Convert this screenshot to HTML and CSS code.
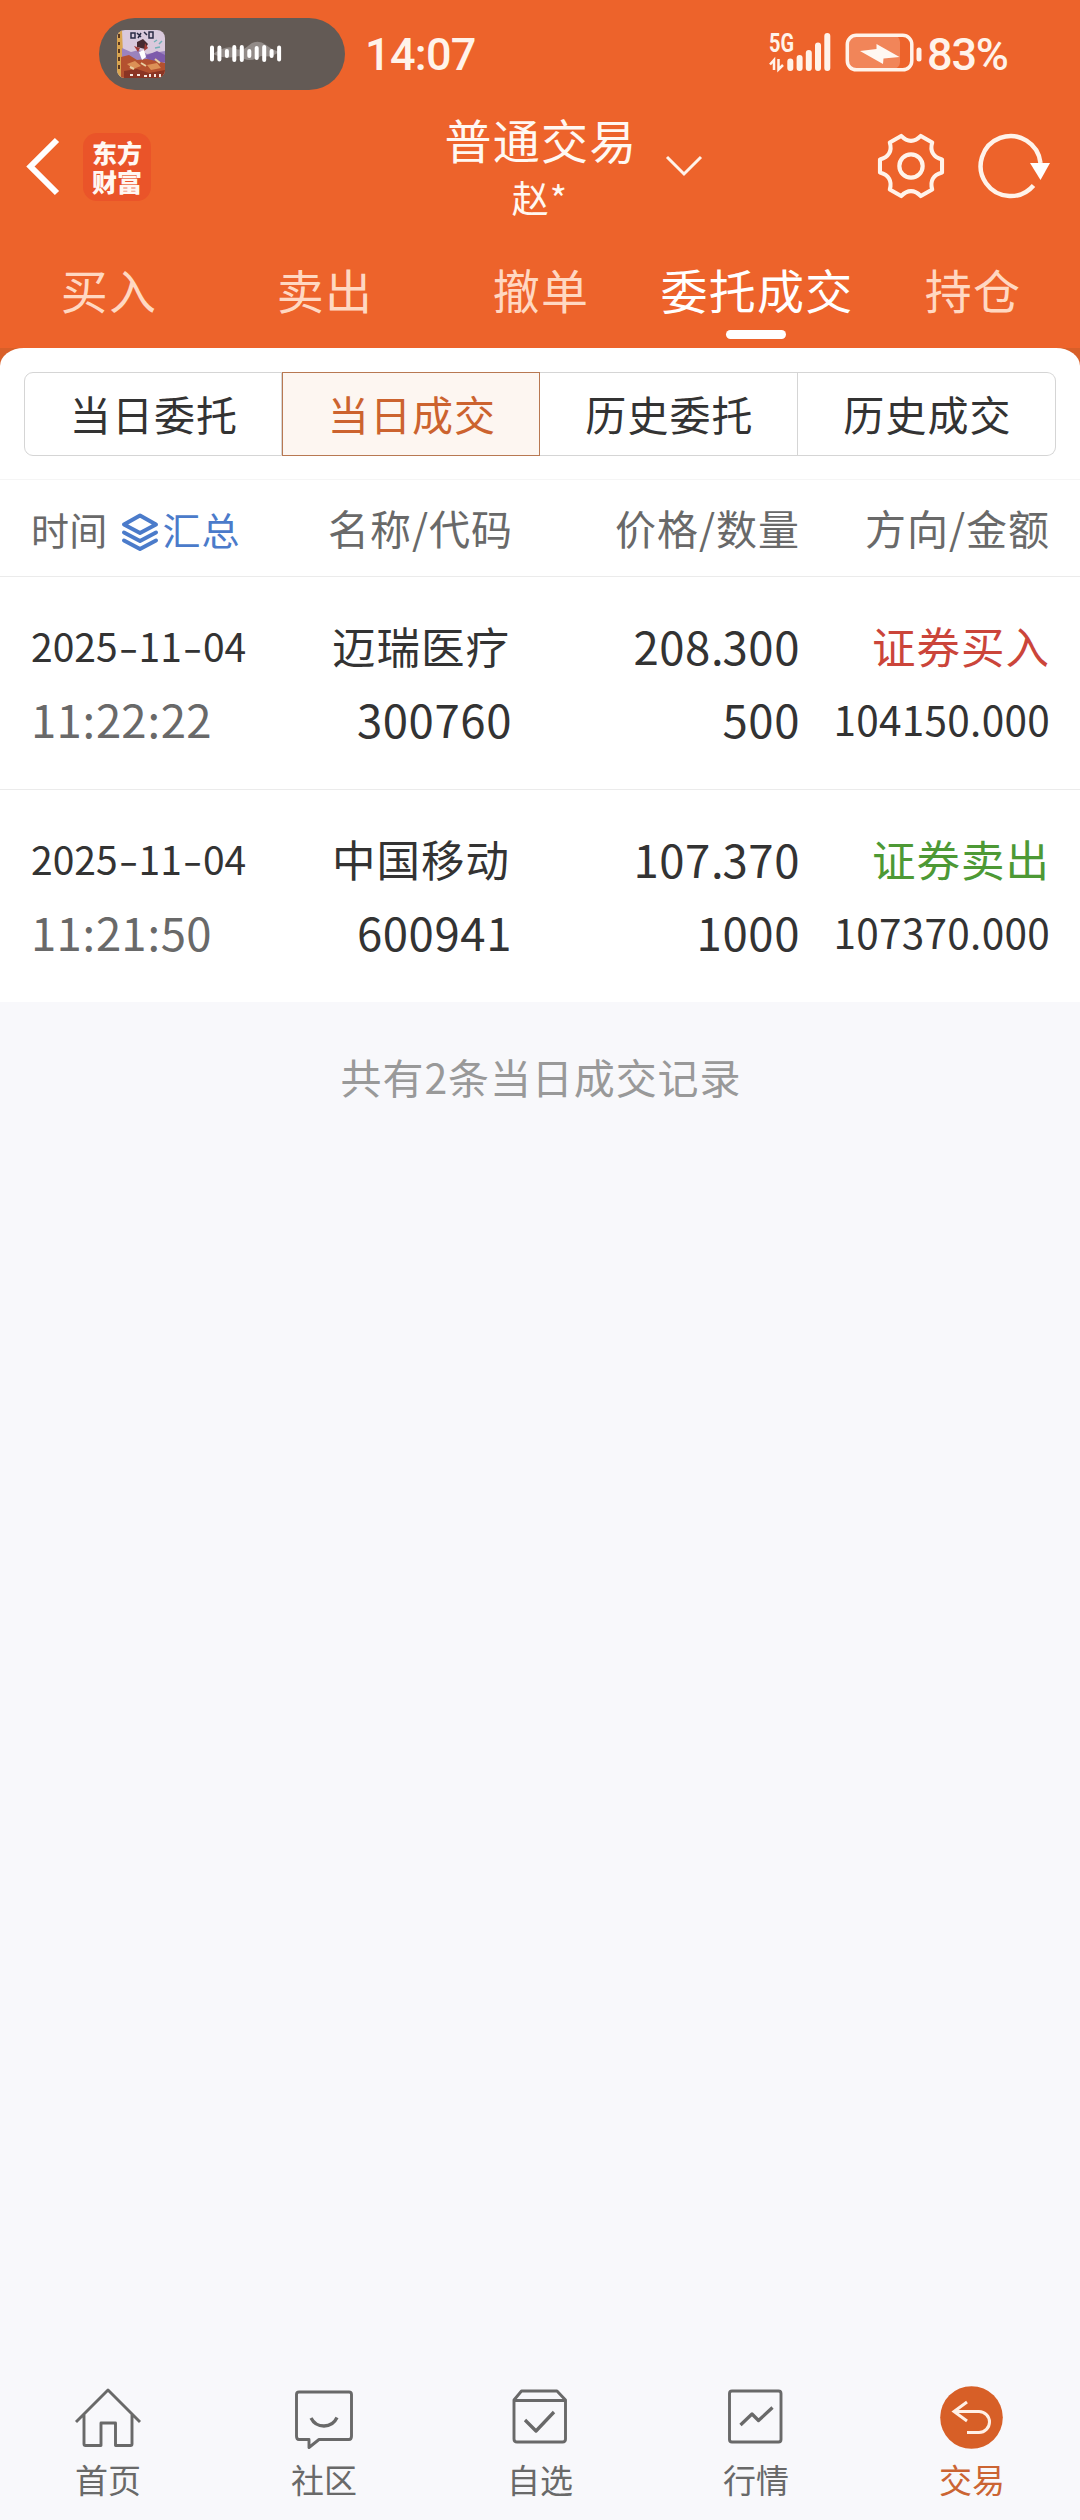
FILE: index.html
```html
<!DOCTYPE html>
<html lang="zh-CN">
<head>
<meta charset="utf-8">
<title>普通交易</title>
<link rel="stylesheet" href="styles.css">
</head>
<body>
<div class="app">
  <header class="top">
    <div class="status">
      <div class="island">
        <svg class="cover" width="48" height="48" viewBox="0 0 48 48">
          <defs><clipPath id="cover-clip"><rect width="48" height="48" rx="8"/></clipPath></defs>
          <g clip-path="url(#cover-clip)">
            <rect width="48" height="48" fill="#d9c9dc"/>
            <path d="M0 0H5L7 48H0Z" fill="#d9a550"/>
            <path d="M2 4v4M2 12v3M2 19v4M2 27v4M2 35v4" stroke="#5d3a20" stroke-width="2"/>
            <path d="M5 18L14 22L22 20L30 24L48 21V36H5Z" fill="#9b83bd"/>
            <path d="M28 26L40 21L48 25V32L34 33Z" fill="#7d5bab"/>
            <path d="M4 27L12 25L20 30L30 29L48 33V48H4Z" fill="#b4512f"/>
            <path d="M10 34L18 31L24 36L16 39ZM30 35L40 33L44 38L34 40Z" fill="#dc9156"/>
            <path d="M7 41L20 39L32 43L48 40V48H7Z" fill="#8a3524"/>
            <path d="M13 37l4 2M24 33l5 3M38 29l5 4" stroke="#e9cfa0" stroke-width="2"/>
            <path d="M20 12L26 9L31 14L28 19L20 17Z" fill="#472a31"/>
            <path d="M17 16L23 18L21 22ZM28 13L31 18L27 21Z" fill="#a33c37"/>
            <path d="M22 22L27 20L29 27L25 30Z" fill="#fff"/>
            <path d="M14 3h4v5h-4zM20 3l4 4M24 3l-3 5M27 2l3 3M32 2h4v6h-4z" fill="none" stroke="#2b2b45" stroke-width="1.5"/>
            <path d="M37 12l3-2M42 14l3-3M38 18l5-1" stroke="#72b0b7" stroke-width="1.5"/>
            <path d="M13 45h3M20 45h3M27 46h3M33 44v3M38 44v3M43 44v3" stroke="#f5e8df" stroke-width="2"/>
          </g>
        </svg>
        <svg class="wave" width="74" height="26" viewBox="0 0 74 26">
          <path d="M4 14Q18 4 27 9Q34 11 39 6Q48-2 57 5Q63 10 70 12Q62 18 52 16Q40 24 30 16Q16 20 4 14Z" fill="#fff" opacity=".3"/>
          <path d="M3 7.500v12M10.400 7.500v12M17.900 11v5M25.300 7v13M32.800 7v13M40.300 11v5M47.700 8v10M55.200 7v13M62.600 11v5M70.100 7.500v12" stroke="#fff" stroke-width="4" stroke-linecap="round"/>
        </svg>
      </div>
      <span class="clock">14:07</span>
      <svg class="signal" width="64" height="42" viewBox="0 0 64 42">
        <text class="net" x="1" y="21" textLength="25" lengthAdjust="spacingAndGlyphs">5G</text>
        <path d="M6 39V29L2 33.500M10.500 28V38.500L15 34" fill="none" stroke="#fff3ea" stroke-width="2.500"/>
        <path d="M22.300 30.500V37M31.600 27V37M40.800 22V37M50 14.500V37M59.300 5V37" stroke="#fff3ea" stroke-width="6" stroke-linecap="round"/>
      </svg>
      <svg class="battery" width="78" height="42" viewBox="0 0 78 42">
        <rect x="4" y="4" width="51" height="34" rx="7" fill="#fff" opacity=".22"/>
        <rect x="2.300" y="4.300" width="64.500" height="34.500" rx="9" fill="none" stroke="#fff3ea" stroke-width="3.500"/>
        <path d="M74 19v9" stroke="#fff3ea" stroke-width="5" stroke-linecap="round"/>
        <path d="M15 20L31.500 18V13L54.500 26L38.500 27.500L38 33Z" fill="#fff8f2"/>
      </svg>
      <span class="percent">83%</span>
    </div>
    <div class="nav">
      <svg class="back" width="36" height="60" viewBox="0 0 36 60"><path d="M33 4L6.500 30.500L33 57" fill="none" stroke="#fff" stroke-width="6"/></svg>
      <div class="brand"><span>东方</span><span>财富</span></div>
      <div class="title">
        <h1>普通交易</h1>
        <p>赵*</p>
      </div>
      <svg class="drop" width="40" height="24" viewBox="0 0 40 24"><path d="M3 3L20 20L37 3" fill="none" stroke="#fff3ea" stroke-width="3"/></svg>
      <svg class="gear" width="68" height="68" viewBox="-102 -102 204 204">
        <g fill="none" stroke="#fff3ea" stroke-width="12.500" stroke-linejoin="round">
          <path transform="scale(.98)" d="M95 20C68 27 57 46 65 72L30 92C11 72-11 72-30 92L-65 72C-57 46-68 27-95 20V-20C-68-27-57-46-65-72L-30-92C-11-72 11-72 30-92L65-72C57-46 68-27 95-20Z"/>
          <circle r="35"/>
        </g>
      </svg>
      <svg class="reload" width="74" height="68" viewBox="0 0 74 68">
        <path d="M55.500 53.500A30 30 0 1 1 62.500 31" fill="none" stroke="#fff3ea" stroke-width="4.500"/>
        <path d="M52 31H72L62.500 48Z" fill="#fff"/>
      </svg>
    </div>
    <nav class="tabs">
      <a>买入</a><a>卖出</a><a>撤单</a><a class="on">委托成交</a><a>持仓</a>
    </nav>
  </header>

  <main class="sheet-back">
    <section class="sheet">
      <div class="segments">
        <a>当日委托</a><a class="on">当日成交</a><a>历史委托</a><a>历史成交</a>
      </div>
      <div class="row head">
        <div class="time-head">
          <span>时间</span>
          <svg width="38" height="40" viewBox="0 0 38 40"><g fill="none" stroke="#4b7bca" stroke-width="4" stroke-linejoin="round" stroke-linecap="round"><path d="M19 3.500L35 12.500L19 21L3 12.500Z"/><path d="M3 20.500L19 29L35 20.500M3 28.500L19 37L35 28.500"/></g></svg>
          <span class="sum">汇总</span>
        </div>
        <div>名称/代码</div><div>价格/数量</div><div>方向/金额</div>
      </div>
      <div class="row trade">
        <div class="date">2025<i>-</i>11<i>-</i>04</div><div class="name">迈瑞医疗</div><div class="num">208<b class="dot">.</b>300</div><div class="name buy">证券买入</div>
        <div class="num time">11<b>:</b>22<b>:</b>22</div><div class="num">300760</div><div class="num">500</div><div class="amount">104150.000</div>
      </div>
      <div class="row trade">
        <div class="date">2025<i>-</i>11<i>-</i>04</div><div class="name">中国移动</div><div class="num">107<b class="dot">.</b>370</div><div class="name sell">证券卖出</div>
        <div class="num time">11<b>:</b>21<b>:</b>50</div><div class="num">600941</div><div class="num">1000</div><div class="amount">107370.000</div>
      </div>
    </section>
  </main>
  <p class="count">共有2条当日成交记录</p>

  <nav class="bottom">
    <a>
      <svg width="72" height="68" viewBox="0 0 72 68"><g fill="none" stroke="#696969" stroke-width="2.900" stroke-linejoin="round"><path d="M4 38L36 6L68 38M12 30V60Q12 61.500 13.500 61.500H29V39H43.500V61.500H58.500Q60 61.500 60 60V30"/></g></svg>
      <span>首页</span>
    </a>
    <a>
      <svg width="72" height="68" viewBox="0 0 72 68"><g fill="none" stroke="#696969" stroke-width="2.900" stroke-linejoin="round"><path d="M11 8H61Q63.500 8 63.500 10.500V52Q63.500 55.500 61 55.500H31L21 63.500V55.500H11Q8.500 55.500 8.500 52V10.500Q8.500 8 11 8Z"/><path d="M23 34Q27 42 36 42Q45 42 49 33.500" stroke-width="3.300"/></g></svg>
      <span>社区</span>
    </a>
    <a>
      <svg width="72" height="68" viewBox="0 0 72 68"><g fill="none" stroke="#696969" stroke-width="2.900" stroke-linejoin="round"><path d="M17.500 7H53L61.500 16V55Q61.500 58 58.500 58H13Q10 58 10 55V16ZM10 16.500H61.500"/><path d="M21 36L32 47L50 28" stroke-width="3.300"/></g></svg>
      <span>自选</span>
    </a>
    <a>
      <svg width="72" height="68" viewBox="0 0 72 68"><g fill="none" stroke="#696969" stroke-width="2.900" stroke-linejoin="round"><rect x="9.500" y="7" width="51.500" height="51" rx="2.500"/><path d="M20.500 41L32 30L38.500 36.500L52.500 23.500" stroke-width="3.300"/></g></svg>
      <span>行情</span>
    </a>
    <a class="on">
      <svg width="72" height="68" viewBox="0 0 72 68"><circle cx="35.500" cy="33.500" r="31.300" fill="#d75f27"/><path d="M31 18L18 27.500L31 37M18 27.500H43A10.500 10.500 0 0 1 43 48.500H31" fill="none" stroke="#fff0e6" stroke-width="3"/></svg>
      <span>交易</span>
    </a>
  </nav>
</div>
</body>
</html>
```
FILE: styles.css
```css
* { box-sizing: border-box; }

body {
  margin: 0;
  background: #f8f8fb;
  color: #333;
  font-family: "Noto Sans CJK SC", sans-serif;
}

h1, p { margin: 0; font-weight: 400; }

.app {
  display: flex;
  flex-direction: column;
  width: 1080px;
  height: 2520px;
}

/* top area */
.top {
  height: 348px;
  background: #ed632b;
  color: #fff8f2;
}

.status {
  display: flex;
  align-items: flex-start;
  height: 108px;
  padding: 18px 0 0 99px;
}

.island {
  display: flex;
  flex: none;
  align-items: center;
  width: 246px;
  height: 72px;
  padding-left: 18px;
  border-radius: 36px;
  background: #635a55;
}
.wave { margin: -2px 0 0 44px; }

.clock, .percent {
  color: #fff3ea;
  font: 500 45px/74px Roboto, sans-serif;
}
.clock { width: 110px; margin-left: 20px; letter-spacing: -.7px; }
.signal { margin: 13px 0 0 293px; overflow: visible; }
.battery { margin: 13px 0 0 13px; }
.percent { margin-left: 4px; letter-spacing: -1.2px; }

.net { fill: #fff3ea; font: 700 26px Roboto, sans-serif; }

.nav {
  display: flex;
  align-items: flex-start;
  height: 132px;
  padding-left: 24px;
}
.back { margin-top: 28px; }
.brand {
  display: flex;
  flex-direction: column;
  align-items: center;
  justify-content: center;
  width: 68px;
  height: 68px;
  margin: 25px 0 0 23px;
  border-radius: 14px;
  background: #ea5429;
  font-size: 25px;
  font-weight: 900;
  line-height: 29px;
}
.title {
  width: 200px;
  margin-left: 290px;
  text-align: center;
}
.title h1 { font-size: 47px; line-height: 61px; letter-spacing: 1.3px; }
.title p { padding-right: 2px; font-size: 37px; line-height: 57px; letter-spacing: 1px; }
.drop { margin: 46px 0 0 23px; }
.gear { margin: 24px 0 0 173px; }
.reload { margin: 24px 0 0 33px; }

.tabs {
  display: grid;
  grid-template-columns: repeat(5, 216px);
  height: 108px;
  color: #ffd8c2;
  font-size: 47px;
  line-height: 98px;
  letter-spacing: 1.2px;
  text-indent: 2px;
}
.tabs a { display: flex; flex-direction: column; align-items: center; }
.tabs .on { color: #fff; }
.tabs .on::after {
  content: "";
  width: 60px;
  height: 9px;
  margin-top: -8px;
  border-radius: 5px;
  background: #fff;
}

/* trades */
.sheet-back { background: linear-gradient(#d85f29 30px, #f8f8fb 30px); }
.sheet {
  padding-top: 24px;
  border-radius: 24px 24px 0 0 / 18px 18px 0 0;
  background: #fff;
}
.segments {
  display: grid;
  grid-template-columns: repeat(4, 258px);
  width: 1032px;
  height: 84px;
  margin: 0 24px 23px;
  font-size: 41px;
  line-height: 80px;
  letter-spacing: 1.1px;
  text-align: center;
  text-indent: 2px;
}
.segments a { border: 1px solid #d5d5d5; border-left-width: 0; }
.segments a:first-child { border-left-width: 1px; border-radius: 9px 0 0 9px; }
.segments a:last-child { border-radius: 0 9px 9px 0; }
.segments .on { border: 1px solid #b87852; background: #fdf6f1; color: #cc632f; }

.row {
  display: grid;
  grid-template-columns: 251px 230px 288px 250px;
  padding-left: 31px;
  border-top: 1px solid #ebebeb;
  text-align: right;
}
.row > :nth-child(4n + 1) { text-align: left; }

.head {
  height: 97px;
  border-top-color: #f5f5f5;
  color: #696969;
  font-size: 41px;
  line-height: 95px;
  letter-spacing: 1px;
}
.head > :nth-child(2) { margin-right: -1px; }
.time-head { display: flex; align-items: center; font-size: 38px; letter-spacing: .3px; }
.time-head svg { margin: 7px 4px 0 13px; }
.sum { color: #4b7bca; letter-spacing: .8px; }

.trade {
  grid-template-rows: 73px 73px;
  height: 213px;
  padding-top: 32px;
  line-height: 73px;
}
.date { font-size: 39px; }
.date i {
  display: inline-block;
  width: 21px;
  font-style: normal;
  text-align: center;
  transform: scaleX(1.45);
}
.name { font-size: 43.500px; letter-spacing: 1px; }
.trade > :nth-child(2) { padding-right: 2px; }
.num { font-size: 45.500px; letter-spacing: .6px; }
.num b { display: inline-block; width: 14px; font-weight: 400; text-align: center; }
.num .dot { width: 11.500px; }
.amount { font-size: 40.500px; letter-spacing: .3px; }
.time { color: #696969; letter-spacing: .2px; }
.buy { color: #cb453a; }
.sell { color: #4d9935; }

.count {
  margin-top: 41px;
  padding-left: 2px;
  color: #999;
  font-size: 41px;
  line-height: 66px;
  letter-spacing: .9px;
  text-align: center;
}

/* bottom bar */
.bottom {
  display: grid;
  grid-template-columns: repeat(5, 216px);
  height: 136px;
  margin-top: auto;
  color: #696969;
  font-size: 33px;
  line-height: 48px;
}
.bottom a { display: flex; flex-direction: column; align-items: center; }
.bottom span { margin-top: 3px; }
.bottom .on { color: #cb6433; }
```
